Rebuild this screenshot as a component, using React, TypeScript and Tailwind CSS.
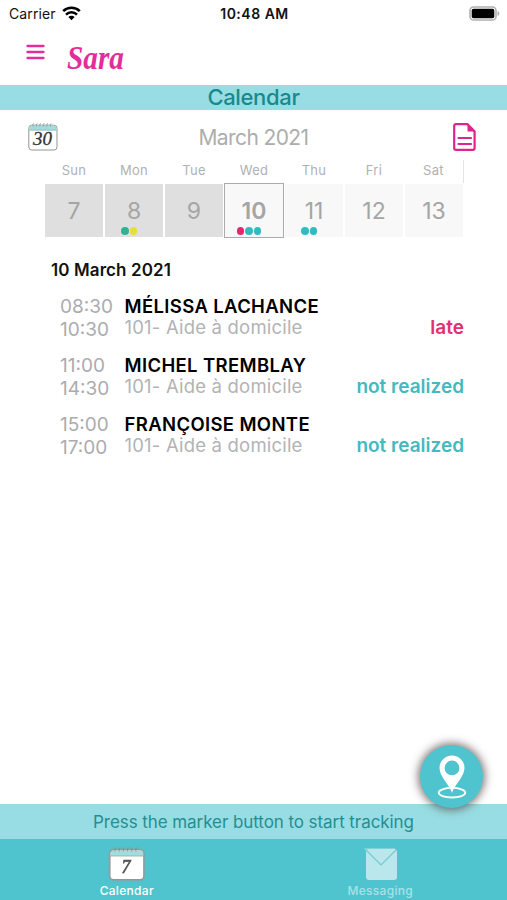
import type { ReactNode } from 'react';

const days = [
  { name: 'Sun', date: 7, past: true, dots: [] },
  { name: 'Mon', date: 8, past: true, dots: ['bg-[#2db392]', 'bg-[#e6e034]'] },
  { name: 'Tue', date: 9, past: true, dots: [] },
  { name: 'Wed', date: 10, selected: true, dots: ['bg-[#e6256b]', 'bg-[#2fbcc0]', 'bg-[#2fbcc0]'] },
  { name: 'Thu', date: 11, dots: ['bg-[#2fbcc0]', 'bg-[#2fbcc0]'] },
  { name: 'Fri', date: 12, dots: [] },
  { name: 'Sat', date: 13, dots: [] },
];

const visits = [
  { start: '08:30', end: '10:30', name: 'MÉLISSA LACHANCE', status: 'late' },
  { start: '11:00', end: '14:30', name: 'MICHEL TREMBLAY', status: 'not realized' },
  { start: '15:00', end: '17:00', name: 'FRANÇOISE MONTE', status: 'not realized' },
];

function StatusBar() {
  return (
    <div className="grid h-7 grid-cols-3 items-center pr-[7px] pl-[9px] text-[14px] text-[#111]">
      <div className="-mt-0.5 flex items-center gap-1.5">
        <span className="tracking-[0.1px]">Carrier</span>
        <svg width="19" height="15" viewBox="0 0 19 15" fill="none" stroke="#000" strokeWidth="2.5">
          <path d="M1.2 5.2a11.8 11.8 0 0 1 16.6 0" />
          <path d="M4 8.6a7.8 7.8 0 0 1 11 0" />
          <path d="M9.5 14.2 6.4 11a4.4 4.4 0 0 1 6.2 0z" fill="#000" stroke="none" />
        </svg>
      </div>
      <span className="-mt-0.5 text-center font-semibold tracking-[0.5px] whitespace-nowrap">10:48 AM</span>
      <svg className="-mt-0.5 justify-self-end" width="31" height="15" viewBox="0 0 31 15">
        <rect x="1" y="1" width="26" height="13" rx="3.6" fill="#fff" stroke="#b0b0b0" strokeWidth="1.6" />
        <rect x="2.7" y="2.7" width="22.6" height="9.6" rx="1.8" fill="#000" />
        <path d="M28.5 5v5c2.4-.8 2.4-4.2 0-5z" fill="#b0b0b0" />
      </svg>
    </div>
  );
}

function CalendarIcon({ children, className }: { children: ReactNode; className?: string }) {
  return (
    <svg className={className} width="30" height="29" viewBox="0 0 30 29">
      <rect x="0.8" y="3.2" width="28.2" height="24.8" rx="3" fill="#fff" stroke="#959595" />
      <path d="M1.4 8V5.5Q1.4 3.6 3.5 3.6h23q2 0 2 1.9V8z" fill="#a3dcdd" />
      <path d="M1.2 8.2h27.4" stroke="#8caeae" strokeWidth="0.8" />
      <path
        d="M5 4.5q-1-3 1-3M8.5 4.5q-1-3 1-3M12 4.5q-1-3 1-3M15.5 4.5q-1-3 1-3M19 4.5q-1-3 1-3M22.5 4.5q-1-3 1-3"
        fill="none"
        stroke="#7c8f8f"
        strokeWidth="0.7"
      />
      {children}
    </svg>
  );
}

function Header() {
  return (
    <header className="flex h-[57px] items-start pl-[26px]">
      <svg className="mt-[16px]" width="19" height="16" viewBox="0 0 19 16" stroke="#e32d9b" strokeWidth="2.3" strokeLinecap="round">
        <path d="M1.5 2h16M1.5 8h16M1.5 14h16" />
      </svg>
      <svg className="ml-[20px] mt-[6px]" width="70" height="46" viewBox="0 0 70 46">
        <text
          x="2"
          y="35"
          textLength="57"
          lengthAdjust="spacingAndGlyphs"
          fill="#e32d9b"
          className="font-['Liberation_Serif',serif] text-[34px] font-bold italic"
        >
          Sara
        </text>
      </svg>
    </header>
  );
}

function WeekStrip() {
  return (
    <div className="ml-[44px] flex w-[421px]">
      {days.map((day) => (
        <div key={day.name} className="w-[60px]">
          <div
            className={`flex h-[23px] items-center justify-center text-[13px] tracking-[0.3px] text-[#b1b1b1] ${day.name === 'Sat' ? 'border-r border-[#e4e4e4]' : ''}`}
          >
            <span className="-mt-0.5">{day.name}</span>
          </div>
          <div
            className={`flex h-[55px] flex-col items-center text-[23px] text-[#a5a5a5] ${
              day.selected
                ? 'border border-[#ababab] bg-[#f8f8f8] font-semibold'
                : `border border-white bg-clip-padding ${day.past ? 'bg-[#dfdfdf]' : 'bg-[#f8f8f8]'}`
            }`}
          >
            <span className="mt-[11px] leading-8">{day.date}</span>
            <div className="-ml-[10px] flex gap-[1px]">
              {day.dots.map((color, i) => (
                <span key={i} className={`size-[7.5px] rounded-full ${color}`} />
              ))}
            </div>
          </div>
        </div>
      ))}
    </div>
  );
}

function VisitRow({ visit }: { visit: (typeof visits)[number] }) {
  return (
    <div className="flex h-[59px] pr-[43px] pl-[60px]">
      <div className="-mt-px w-[64.5px] text-[19px] leading-[23px] text-[#ababb0]">
        <div>{visit.start}</div>
        <div>{visit.end}</div>
      </div>
      <div className="flex-1 leading-[21px]">
        <div className="text-[18.5px] font-semibold tracking-[0.36px] whitespace-nowrap text-black">{visit.name}</div>
        <div className="flex justify-between">
          <span className="text-[18.5px] tracking-[0.2px] text-[#b3b3b5]">101- Aide à domicile</span>
          <span className={`text-[19px] font-semibold ${visit.status === 'late' ? 'text-[#e22e72]' : 'text-[#43babf]'}`}>
            {visit.status}
          </span>
        </div>
      </div>
    </div>
  );
}

function TrackButton() {
  return (
    <button className="absolute -top-[59px] right-[24px] flex size-[63px] items-center justify-center rounded-full bg-[#50c4ce] shadow-[0_0_9px_2px_rgba(80,65,65,0.7)]">
      <svg width="30" height="44" viewBox="0 0 30 44">
        <ellipse cx="15" cy="37.7" rx="13.3" ry="4.8" fill="none" stroke="#fff" strokeWidth="1.8" />
        <path
          d="M15 38C13 30 2.5 22 2.5 13a12.5 12.5 0 0 1 25 0C27.5 22 17 30 15 38zM15 5.5a7.4 7.4 0 1 0 0 14.8a7.4 7.4 0 1 0 0-14.8z"
          fill="#fff"
          fillRule="evenodd"
        />
      </svg>
    </button>
  );
}

function TabBar() {
  return (
    <nav className="grid h-[61px] grid-cols-2 bg-[#50c4ce] text-[12px] font-medium tracking-[0.3px]">
      <div className="flex flex-col items-center pt-[7px] text-white">
        <CalendarIcon className="h-[35px] w-[36px] drop-shadow-[0_0_1px_#999]">
          <text x="10.5" y="22.5" fill="#555" stroke="#555" strokeWidth="0.6" className="font-['Liberation_Serif',serif] text-[15px] italic">
            7
          </text>
        </CalendarIcon>
        <span className="mt-[2px] leading-4">Calendar</span>
      </div>
      <div className="flex flex-col items-center pt-[7px] text-[#a9e1e6]">
        <svg width="38" height="35" viewBox="0 0 38 35">
          <path d="M3 2h31v31H8q-3 0-3-3V6z" fill="#7dd2d9" />
          <rect x="5" y="3" width="31" height="31" rx="3" fill="#bae7eb" />
          <path d="m5 4 15 15L35 4" fill="none" stroke="#70cbd2" strokeWidth="1.2" />
        </svg>
        <span className="mt-[2px] leading-4">Messaging</span>
      </div>
    </nav>
  );
}

export default function App() {
  return (
    <div className="flex h-[900px] w-[507px] flex-col overflow-hidden bg-white font-['Inter',sans-serif]">
      <StatusBar />
      <Header />
      <h1 className="h-[25px] bg-[#98dde3] text-center text-[22px] leading-[25px] font-medium tracking-[-0.35px] text-[#168a8d]">
        Calendar
      </h1>
      <div className="flex h-[50px] items-center justify-between pt-1 pr-[31px] pl-[28px]">
        <CalendarIcon className="-mt-0.5">
          <text
            x="5"
            y="22.5"
            textLength="19"
            lengthAdjust="spacingAndGlyphs"
            fill="#333"
            stroke="#333"
            strokeWidth="0.3"
            className="font-['Liberation_Serif',serif] text-[18px] italic"
          >
            30
          </text>
        </CalendarIcon>
        <span className="mt-0.5 -ml-1 text-[21px] tracking-[-0.6px] text-[#adadad]">March 2021</span>
        <svg className="-mt-px" width="23" height="28" viewBox="0 0 23 28" fill="none" stroke="#df238f">
          <path d="M14.5 1.2H3q-1.8 0-1.8 1.8v22q0 1.8 1.8 1.8h16.8q1.8 0 1.8-1.8V8.5z" strokeWidth="2.2" />
          <path d="M14.5 1v7.5H22z" fill="#df238f" stroke="none" />
          <path d="M5.5 15h12.5M5.5 21h12.5" strokeWidth="2.2" strokeLinecap="round" />
        </svg>
      </div>
      <WeekStrip />
      <h2 className="mt-5 pl-[51px] text-[17px] leading-6 font-semibold tracking-[0.1px] text-[#111]">10 March 2021</h2>
      <div className="mt-[14px]">
        {visits.map((visit) => (
          <VisitRow key={visit.start} visit={visit} />
        ))}
      </div>
      <footer className="relative mt-auto">
        <div className="h-[35px] bg-[#98dde3] text-center text-[17px] leading-[37px] tracking-[-0.07px] text-[#238f93]">
          Press the marker button to start tracking
        </div>
        <TrackButton />
        <TabBar />
      </footer>
    </div>
  );
}
